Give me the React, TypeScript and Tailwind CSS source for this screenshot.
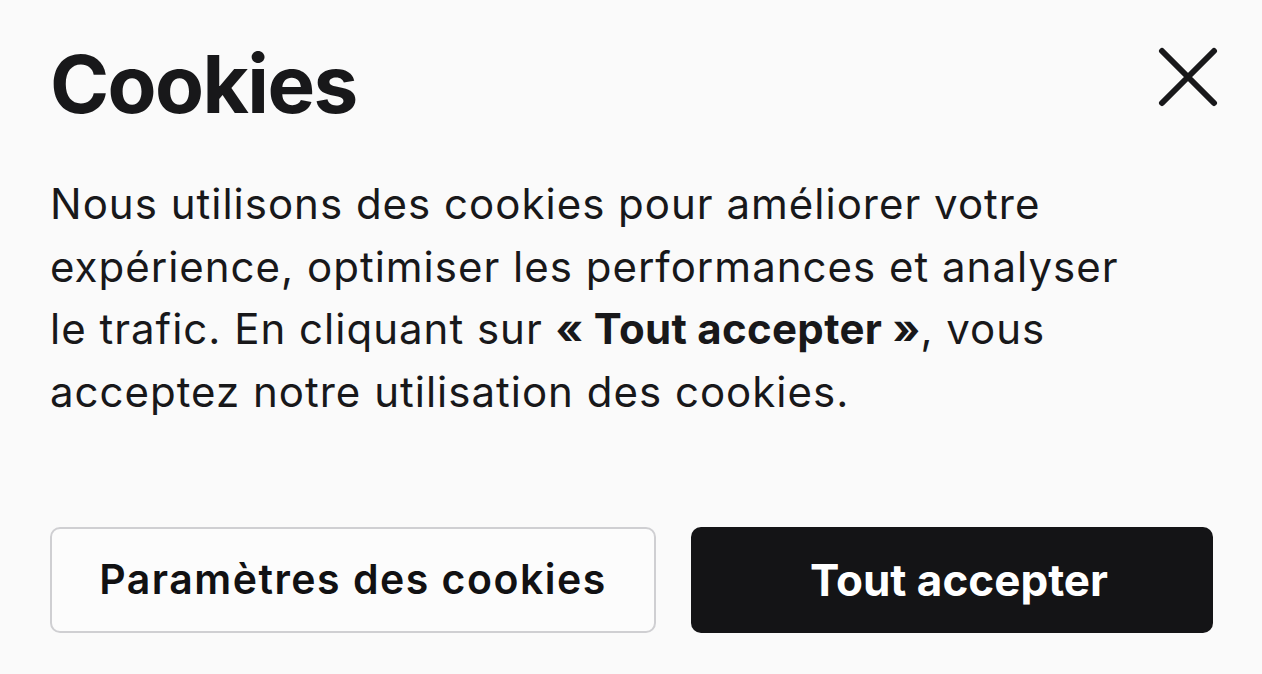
import React from "react";

export default function App() {
  return (
    <div
      className="w-[1262px] h-[674px] bg-[#fafafa] text-[#18181a] overflow-hidden"
      style={{ fontFamily: "Inter, 'Noto Sans', sans-serif" }}
    >
      <div className="flex flex-col pl-[50px] pr-[49px] pt-[34px]">
        <div className="flex items-start justify-between">
          <h1 className="text-[80px] leading-[100px] font-bold tracking-[-1.6px]">Cookies</h1>
          <button className="mt-[13px] mr-[-5px] w-[60px] h-[60px] flex items-center justify-center">
            <svg width="60" height="60" viewBox="0 0 60 60" fill="none">
              <path d="M4 4 L56 56 M56 4 L4 56" stroke="#18181a" strokeWidth="6" strokeLinecap="round" />
            </svg>
          </button>
        </div>
        <p className="mt-[39px] text-[42px] leading-[62.5px] font-normal tracking-[1px] whitespace-nowrap">
          Nous utilisons des cookies pour améliorer votre
          <br />
          expérience, optimiser les performances et analyser
          <br />
          le trafic. En cliquant sur <span className="font-bold tracking-[0.3px]">« Tout accepter »</span>, vous
          <br />
          acceptez notre utilisation des cookies.
        </p>
        <div className="flex gap-[35px] mt-[104px]">
          <button className="w-[606px] h-[106px] rounded-[10px] border-2 border-[#cfcfd2] bg-[#fcfcfc] text-[41px] font-semibold tracking-[1.5px] text-[#111113]">
            Paramètres des cookies
          </button>
          <button className="w-[522px] h-[106px] rounded-[10px] bg-[#141416] pl-[14px] text-[44px] font-bold text-white">
            Tout accepter
          </button>
        </div>
      </div>
    </div>
  );
}
